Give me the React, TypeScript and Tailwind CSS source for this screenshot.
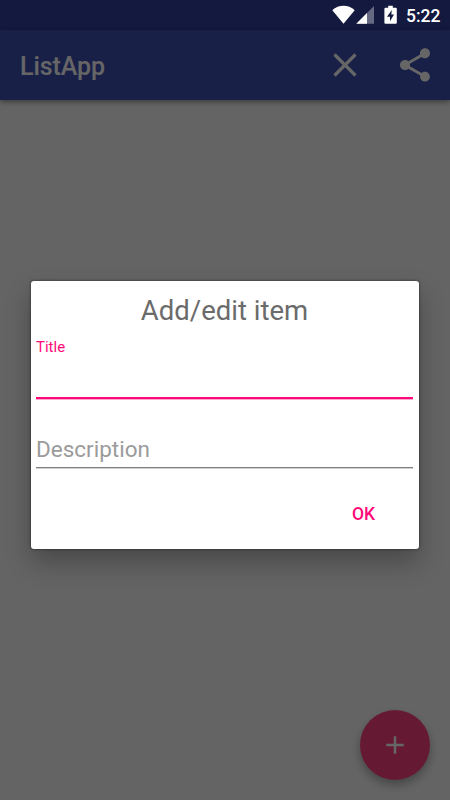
import { useState } from 'react'

function StatusIcons() {
  return (
    <div className="relative z-20 flex h-[30px] items-center justify-end pr-[10px] text-white">
      <svg width="24" height="20" viewBox="0 0 24 20" fill="currentColor">
        <path d="M0.3 5.2C3.5 2.2 7.5 0.8 11.5 0.8s8 1.4 11.2 4.4L11.5 18.7z" />
      </svg>
      <svg width="18" height="20" viewBox="0 0 18 20" fill="currentColor">
        <path d="M18 1v17.7H0.3z" fillOpacity="0.35" />
        <path d="M11 8v10.7H0.3z" />
      </svg>
      <svg width="13" height="20" viewBox="0 0 13 20" className="ml-[10px]" fill="currentColor">
        <path
          fillRule="evenodd"
          d="M4.2 0.8h4.6v2h3q1 0 1 1v14q0 1-1 1h-10.4q-1 0-1-1v-14q0-1 1-1h2.8zM7.8 5L3 11.8h3V16.300l4-6.800H7.300z"
        />
      </svg>
      <span className="ml-[9px] mt-px w-[34px] whitespace-nowrap text-[17.5px] leading-5 font-medium">5:22</span>
    </div>
  )
}

function CloseIcon() {
  return (
    <svg width="40" height="40" viewBox="0 0 24 24" fill="currentColor">
      <path d="M19 6.410L17.590 5 12 10.590 6.410 5 5 6.410 10.590 12 5 17.590 6.410 19 12 13.410 17.590 19 19 17.590 13.410 12z" />
    </svg>
  )
}

function ShareIcon() {
  return (
    <svg width="40" height="40" viewBox="0 0 24 24" fill="currentColor">
      <path d="M18 16.080c-.76 0-1.440.3-1.960.77L8.910 12.700c.05-.23.09-.46.09-.7s-.04-.47-.09-.7l7.050-4.110c.54.5 1.250.81 2.040.81 1.660 0 3-1.340 3-3s-1.340-3-3-3-3 1.340-3 3c0 .24.04.47.09.7L8.040 9.810C7.500 9.310 6.790 9 6 9c-1.660 0-3 1.340-3 3s1.340 3 3 3c.79 0 1.500-.31 2.040-.81l7.120 4.160c-.05.21-.08.43-.08.65 0 1.610 1.310 2.920 2.920 2.920s2.920-1.310 2.920-2.920-1.310-2.920-2.920-2.920z" />
    </svg>
  )
}

function ItemDialog() {
  const [title, setTitle] = useState('')
  const [description, setDescription] = useState('')

  return (
    <div
      role="dialog"
      className="flex h-[267.5px] w-[388px] flex-col rounded-[3px] bg-white pr-[6px] pl-[5px] shadow-[0_13px_26px_rgba(0,0,0,0.28),0_0_3px_rgba(0,0,0,0.55)]"
    >
      <h2 className="mt-[12px] text-center text-[27.5px] leading-[35px] text-[#6b6b6b]">Add/edit item</h2>
      <label className="mt-[10px] text-[15px] leading-[18px] text-[#ff0a78]" htmlFor="title">
        Title
      </label>
      <input
        id="title"
        value={title}
        onChange={(e) => setTitle(e.target.value)}
        className="h-[43px] border-b-2 border-[#ff0a78] text-[22.5px] shadow-[0_1px_0_#ffa6cf] outline-none"
      />
      <input
        value={description}
        onChange={(e) => setDescription(e.target.value)}
        placeholder="Description"
        className="mt-[31px] h-[38px] border-b border-[#808080] text-[22.5px] text-gray-900 shadow-[0_1px_0_#d0d0d0] outline-none placeholder:text-[#9b9b9b]"
      />
      <div className="flex justify-end pt-[36px] pr-[38px]">
        <button className="text-[17.5px] leading-5 font-medium text-[#ff0a78]">OK</button>
      </div>
    </div>
  )
}

export default function App() {
  return (
    <div className="relative h-[800px] w-[450px] overflow-hidden bg-[#fafafa] font-[Roboto,sans-serif]">
      <div className="bg-[#303f9f]">
        <StatusIcons />
      </div>
      <header className="flex h-[70px] items-center bg-[#3f51b5] pr-[15px] pl-5 text-white shadow-[0_2px_5px_rgba(0,0,0,0.4)]">
        <h1 className="flex-1 pt-[3px] text-[25px] font-medium tracking-[-0.1px]">ListApp</h1>
        <button className="mr-[30px]" aria-label="Close">
          <CloseIcon />
        </button>
        <button aria-label="Share">
          <ShareIcon />
        </button>
      </header>

      <button
        aria-label="Add item"
        className="absolute right-5 bottom-5 flex h-[70px] w-[70px] items-center justify-center rounded-full bg-[#ff4081] text-white shadow-[0_5px_10px_rgba(0,0,0,0.3)]"
      >
        <svg width="30" height="30" viewBox="0 0 24 24" fill="currentColor">
          <path d="M19 13h-6v6h-2v-6H5v-2h6V5h2v6h6v2z" />
        </svg>
      </button>

      {/* Scrim */}
      <div className="absolute inset-0 z-10 flex items-start justify-center bg-black/60 pt-[281px]">
        <ItemDialog />
      </div>
    </div>
  )
}
